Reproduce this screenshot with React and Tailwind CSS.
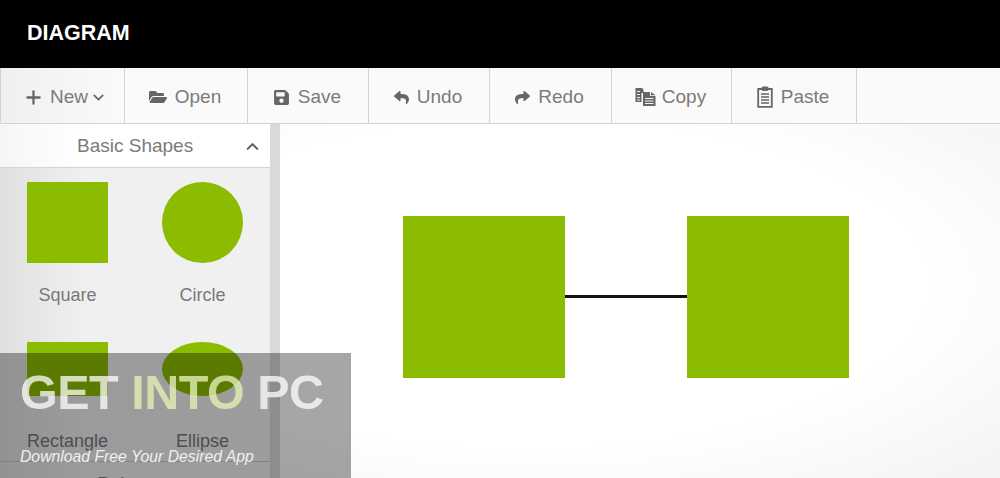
import { Plus, ChevronDown, ChevronUp } from 'lucide-react'
import { FaFolderOpen, FaSave, FaReply, FaShare } from 'react-icons/fa'

function CopyIcon() {
  return (
    <svg width="21" height="20" viewBox="0 0 21 20" fill="currentColor">
      <path d="M0.5 1h6.5l1.5 1.5V6H6.5v9h-6z" />
      <path d="M2 4h3v1H2zM2 7h3v1H2zM2 10h3v1H2zM2 12.5h3v1H2z" fill="#f4f4f4" />
      <path d="M9 5h6v4h5.5v10H8V5z" />
      <path d="M16 5l4.5 3.2H16z" />
      <path d="M10 11h8.5v1H10zM10 13.5h8.5v1H10zM10 16h8.5v1H10z" fill="#f4f4f4" />
    </svg>
  )
}

function PasteIcon() {
  return (
    <svg width="16" height="22" viewBox="0 0 16 22" fill="none" stroke="currentColor">
      <path d="M5 3H1.2v17.8h13.6V3H11" strokeWidth="1.8" />
      <rect x="5" y="1" width="6" height="3.4" rx="0.6" fill="currentColor" strokeWidth="1" />
      <path d="M4 8h8M4 11h8M4 14h8M4 17h8" strokeWidth="1.6" />
    </svg>
  )
}

const tools = [
  { label: 'Open', w: 'w-[123px]', icon: <FaFolderOpen size={18} /> },
  { label: 'Save', w: 'w-[121px]', icon: <FaSave size={17} /> },
  { label: 'Undo', w: 'w-[121px]', icon: <FaReply size={15} /> },
  { label: 'Redo', w: 'w-[122px]', icon: <FaShare size={15} /> },
  { label: 'Copy', w: 'w-[120px]', icon: <CopyIcon />, gap: 'gap-[6px]' },
  { label: 'Paste', w: 'w-[125px]', icon: <PasteIcon /> },
]

function Shape({ label, h, shape, labelGap }) {
  return (
    <div className="flex flex-col items-center px-[27px]">
      <div className={`w-[81px] bg-[#8cbc00] ${h} ${shape}`} />
      <div className={`text-[18px] leading-[20px] text-[#77787c] ${labelGap}`}>{label}</div>
    </div>
  )
}

export default function App() {
  return (
    <div className="relative flex h-[478px] w-[1000px] flex-col overflow-hidden bg-white font-['Liberation_Sans',sans-serif]">
      <header className="flex h-[68px] shrink-0 items-center bg-black pb-[2px] pl-[27px] text-[21.5px] font-bold text-white">
        DIAGRAM
      </header>

      <div className="flex h-[56px] shrink-0 border-b border-[#d4d4d4] bg-[#fafafa] text-[19px] text-[#7b7b7b]">
        <button className="flex w-[125px] items-center justify-center border-x border-[#d4d4d4] bg-gradient-to-r from-[#f0f0f0] to-[#fafafa] pl-[5px] pt-[3px]">
          <Plus size={21} strokeWidth={2.6} className="mr-[6px] text-[#666]" />
          New
          <ChevronDown size={17} strokeWidth={2.4} className="ml-[2px] text-[#666]" />
        </button>
        {tools.map((t) => (
          <button key={t.label} className={`flex items-center justify-center border-r border-[#d4d4d4] pr-[2px] pt-[3px] ${t.gap || 'gap-2'} ${t.w}`}>
            <span className="text-[#666]">{t.icon}</span>
            {t.label}
          </button>
        ))}
      </div>

      <div className="flex min-h-0 flex-1">
        <aside className="flex w-[270px] shrink-0 flex-col bg-gradient-to-r from-[#e0e0e0] via-[#efefef] via-30% to-[#f1f1f1]">
          <div className="flex h-[44px] shrink-0 items-center border-b border-[#d4d4d4] bg-gradient-to-r from-[#f6f6f6] via-white via-30% to-white pr-[8px] pt-[1px]">
            <div className="flex-1 pl-[77px] text-[19px] text-[#7b7b7b]">Basic Shapes</div>
            <ChevronUp size={19} strokeWidth={2.4} className="text-[#555]" />
          </div>
          <div className="grid h-[294px] shrink-0 grid-cols-2 content-start gap-y-[37px] border-b border-[#c8c8c8] pt-[14px]">
            <Shape label="Square" h="h-[81px]" labelGap="mt-[22px]" />
            <Shape label="Circle" h="h-[81px]" shape="rounded-full" labelGap="mt-[22px]" />
            <Shape label="Rectangle" h="h-[54px]" labelGap="mt-[35px]" />
            <Shape label="Ellipse" h="h-[54px]" shape="rounded-[50%]" labelGap="mt-[35px]" />
          </div>
          <div className="pl-[97px] pt-[11px] text-[19px] leading-[22px] text-[#7b7b7b]">Polygon</div>
        </aside>
        <div className="w-[10px] shrink-0 bg-[#d9d9d9]" />
        <main className="relative flex-1 bg-[radial-gradient(ellipse_at_35%_45%,#ffffff_60%,#ebebeb_125%)]">
          <div className="absolute left-[123px] top-[92px] h-[162px] w-[162px] bg-[#8cbc00]" />
          <div className="absolute left-[285px] top-[171px] h-[3px] w-[122px] bg-[#111]" />
          <div className="absolute left-[407px] top-[92px] h-[162px] w-[162px] bg-[#8cbc00]" />
        </main>
      </div>

      <div className="absolute bottom-0 left-0 flex h-[125px] w-[351px] flex-col bg-black/35 pl-[20px]">
        <div className="pt-[8px] text-[48.5px] font-bold leading-[62px] tracking-[-0.5px] text-white/75">
          GET <span className="text-[#e2efb4]/80">INTO</span> PC
        </div>
        <div className="mt-[24px] text-[15.75px] italic leading-[20px] text-white/85">Download Free Your Desired App</div>
      </div>
    </div>
  )
}
